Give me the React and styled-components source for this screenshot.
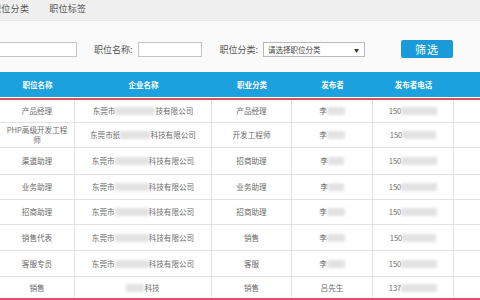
import React from 'react';
import styled, { createGlobalStyle } from 'styled-components';

const GlobalStyle = createGlobalStyle`
  html, body {
    margin: 0;
    padding: 0;
    background: #fafafa;
    overflow: hidden;
  }
  body {
    font-family: "Noto Sans CJK SC", "Noto Sans", sans-serif;
  }
`;

const rows = [
  { title: '产品经理', co: ['东莞市', 40, '技有限公司'], cat: '产品经理', who: ['李', 18], tel: ['150', 36], h: 23 },
  { title: 'PHP高级开发工程师', co: ['东莞市纸', 30, '科技有限公司'], cat: '开发工程师', who: ['李', 18], tel: ['150', 34], h: 25 },
  { title: '渠道助理', co: ['东莞市', 34, '科技有限公司'], cat: '招商助理', who: ['李', 16], tel: ['150', 36], h: 27 },
  { title: '业务助理', co: ['东莞市', 34, '科技有限公司'], cat: '业务助理', who: ['李', 16], tel: ['150', 36], h: 25 },
  { title: '招商助理', co: ['东莞市', 34, '科技有限公司'], cat: '招商助理', who: ['李', 18], tel: ['150', 36], h: 25 },
  { title: '销售代表', co: ['东莞市', 34, '科技有限公司'], cat: '销售', who: ['李', 18], tel: ['150', 34], h: 26 },
  { title: '客服专员', co: ['东莞市', 34, '科技有限公司'], cat: '客服', who: ['李', 18], tel: ['150', 36], h: 26 },
  { title: '销售', co: ['', 18, '科技'], cat: '销售', who: ['吕先生', 0], tel: ['137', 36], h: 21 },
];

const App = () => (
  <Page>
    <GlobalStyle />
    <TabBar>
      <Tab>职位分类</Tab>
      <Tab>职位标签</Tab>
    </TabBar>

    <Filters>
      <Input $w={87} />
      <Label>职位名称:</Label>
      <Input $w={64} />
      <Label $ml={18}>职位分类:</Label>
      <Select>
        <span>请选择职位分类</span>
        <Arrow>▼</Arrow>
      </Select>
      <Button>筛选</Button>
    </Filters>

    <Table>
      <Head>
        <HeadCell>职位名称</HeadCell>
        <HeadCell>企业名称</HeadCell>
        <HeadCell>职业分类</HeadCell>
        <HeadCell>发布者</HeadCell>
        <HeadCell>发布者电话</HeadCell>
        <HeadCell />
      </Head>
      <Body>
        {rows.map((r, i) => (
          <Row key={i} $h={r.h}>
            <Cell>{r.title}</Cell>
            <Cell>
              {r.co[0]}
              <Blur $w={r.co[1]} />
              {r.co[2]}
            </Cell>
            <Cell>{r.cat}</Cell>
            <Cell>
              {r.who[0]}
              {r.who[1] > 0 && <Blur $w={r.who[1]} />}
            </Cell>
            <Cell>
              {r.tel[0]}
              <Blur $w={r.tel[1]} />
            </Cell>
            <Cell />
          </Row>
        ))}
      </Body>
    </Table>
  </Page>
);

export default App;

const Page = styled.div`
  width: 480px;
  height: 300px;
  overflow: hidden;
  background: #fafafa;
`;

const TabBar = styled.div`
  height: 21px;
  background: #f0f0f0;
  border-bottom: 1px solid #e8e8e8;
  display: flex;
  align-items: center;
  gap: 20px;
  margin-left: -8px;
  padding-bottom: 4px;
  box-sizing: border-box;
`;

const Tab = styled.div`
  font-size: 9px;
  color: #555;
  letter-spacing: 0.3px;
`;

const Filters = styled.div`
  display: flex;
  align-items: center;
  margin: 19px 0 0 -10px;
  height: 18px;
`;

const Input = styled.div`
  width: ${p => p.$w}px;
  height: 15px;
  box-sizing: border-box;
  border: 1px solid #c4c4c4;
  background: #fff;
`;

const Label = styled.span`
  font-size: 9px;
  color: #555;
  margin: 0 5px 0 ${p => p.$ml || 17}px;
  white-space: nowrap;
`;

const Select = styled.div`
  width: 102px;
  height: 15px;
  box-sizing: border-box;
  border: 1px solid #b8b8b8;
  background: #fff;
  display: flex;
  align-items: center;
  justify-content: space-between;
  padding: 0 5px 0 4px;
  font-size: 7.5px;
  color: #444;
`;

const Arrow = styled.span`
  font-size: 5px;
  color: #333;
`;

const Button = styled.div`
  margin-left: 36px;
  width: 52px;
  height: 18px;
  border-radius: 2px;
  background: #1a9ad9;
  color: #fff;
  font-size: 11px;
  display: flex;
  align-items: center;
  justify-content: center;
  letter-spacing: 1px;
`;

const cols = '75px 137px 80px 81px 81px 1fr';

const Table = styled.div`
  margin-top: 14px;
  background: #fff;
`;

const Head = styled.div`
  display: grid;
  grid-template-columns: ${cols};
  height: 25px;
  background: #1ba1dd;
`;

const HeadCell = styled.div`
  display: flex;
  align-items: center;
  justify-content: center;
  color: #fff;
  font-size: 7.5px;
  font-weight: bold;
`;

const Body = styled.div`
  margin-top: 1px;
  border-top: 2px solid #d9545a;
  border-bottom: 2px solid #e0506c;
`;

const Row = styled.div`
  display: grid;
  grid-template-columns: ${cols};
  height: ${p => p.$h}px;
  box-sizing: border-box;
  border-bottom: 1px solid #e2e2e2;
  &:last-child {
    border-bottom: none;
  }
`;

const Cell = styled.div`
  display: flex;
  align-items: center;
  justify-content: center;
  text-align: center;
  padding: 0 6px;
  font-size: 7.6px;
  line-height: 10px;
  color: #6a6a6a;
  border-right: 1px solid #e2e2e2;
  &:last-child {
    border-right: none;
  }
`;

const Blur = styled.span`
  display: inline-block;
  width: ${p => p.$w}px;
  height: 8px;
  background: #e2e2e2;
  filter: blur(1.5px);
  vertical-align: middle;
`;
